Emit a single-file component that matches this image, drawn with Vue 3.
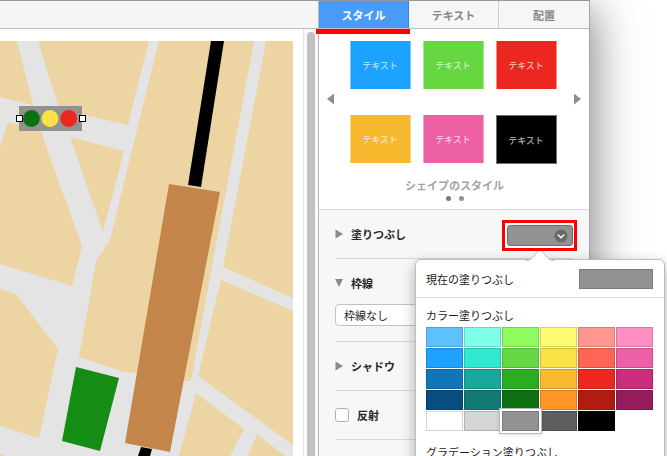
<script setup>
import { ref } from 'vue'

const tabs = ['スタイル', 'テキスト', '配置']
const activeTab = ref('スタイル')

const shapeStyles = [
  { fill: '#1ea2ff', edge: '#7cc8ff' },
  { fill: '#66d741', edge: '#a6e890' },
  { fill: '#ec271f', edge: '#f48a85' },
  { fill: '#f6b82c', edge: '#fad785' },
  { fill: '#ee60a4', edge: '#f5a4cb' },
  { fill: '#000000', edge: '#6b7075' },
]

const colors = [
  '#5cc1fd', '#7dffe9', '#8ffb5c', '#fffb70', '#ff968f', '#ff8ec4',
  '#1ea2ff', '#31e8d0', '#65d844', '#f9e246', '#ff6454', '#ed60a5',
  '#1176b9', '#1ba89c', '#2aae20', '#f7ba2c', '#ec271f', '#ca2d7b',
  '#074e7e', '#117a75', '#0c7211', '#ff9627', '#b11b10', '#961c5c',
  '#ffffff', '#d5d5d5', '#929292', '#5e5e5e', '#000000',
]
const selectedColor = ref('#929292')
const border = ref('none')
const reflection = ref(false)

const blocks = [
  '0,41 17,41 33,105 0,97',
  '38,41 149,41 128,125 59,109',
  '8,122 41,130 48,152 82,246 72,286 0,264 0,148',
  '74,138 124,151 103,232 70,137',
  '159,41 254,41 205,304 191,381 178,381 137,373 124,372 79,357 89,302 96,261 110,240 132,150',
  '266,41 293,41 293,298 223,267 245,152',
  '221,280 293,311 293,445 198,376 215,304',
  '0,289 16,294 22,302 58,349 39,438 0,426',
  '196,393 244,429 230,456 179,456',
  '257,434 285,456 248,456',
  '0,454 5,456 0,456',
]
</script>

<template>
  <div class="desktop">
    <div class="window">
      <main class="document">
        <div class="toolbar"></div>
        <div class="workspace">
          <div class="page">
            <svg class="map" viewBox="0 41 293 415" width="293" height="415" role="img" aria-label="地図">
              <rect x="0" y="41" width="293" height="415" fill="#e4e4e4" />
              <polygon v-for="b in blocks" :key="b" :points="b" fill="#ecd4a3" />
              <polygon points="211,41 224,41 201,187 188,185" fill="#000" />
              <polygon points="141,447 152,449 150,456 138,456" fill="#000" />
              <polygon points="169,184 220,192 170,452 125,443" fill="#c38549" />
              <polygon points="76,367 119,378 100,451 62,441" fill="#158d15" />
              <rect x="19" y="106" width="63" height="25" fill="#929292" />
              <circle cx="31.5" cy="118.5" r="8.4" fill="#0c7211" />
              <circle cx="50" cy="118.5" r="8.4" fill="#f9e246" />
              <circle cx="68.7" cy="118.5" r="8.4" fill="#ec271f" />
              <rect x="16.5" y="115.5" width="6" height="6" fill="#fff" stroke="#000" />
              <rect x="79.5" y="115.5" width="6" height="6" fill="#fff" stroke="#000" />
            </svg>
          </div>
          <div class="scrollbar"><div class="thumb"></div></div>
        </div>
      </main>

      <aside class="inspector">
        <nav class="tabs">
          <button
            v-for="t in tabs"
            :key="t"
            type="button"
            class="tab"
            :class="{ active: t === activeTab }"
            @click="activeTab = t"
          >{{ t }}</button>
          <span class="tab-mark"></span>
        </nav>

        <section class="styles">
          <div class="gallery">
            <button type="button" class="arrow" aria-label="前へ">
              <svg width="8" height="12" viewBox="0 0 8 12"><path d="M7 0.5V11.5L0 6Z" fill="#8e8e8e" /></svg>
            </button>
            <div class="thumbs">
              <button
                v-for="s in shapeStyles"
                :key="s.fill"
                type="button"
                class="shape"
                :style="{ background: s.fill, borderColor: s.edge }"
              >テキスト</button>
            </div>
            <button type="button" class="arrow" aria-label="次へ">
              <svg width="8" height="12" viewBox="0 0 8 12"><path d="M0 0.5V11.5L7 6Z" fill="#8e8e8e" /></svg>
            </button>
          </div>
          <p class="caption">シェイプのスタイル</p>
          <div class="dots"><i class="dot current"></i><i class="dot"></i></div>
        </section>

        <div class="rows">
          <section class="row">
            <svg class="disclosure" width="8" height="10" viewBox="0 0 8 10"><path d="M0.5 0.5V9.5L8 5Z" fill="#8a8a8a" /></svg>
            <h2>塗りつぶし</h2>
            <div class="well-wrap">
              <button type="button" class="well" aria-label="塗りつぶしを選択">
                <svg width="14" height="14" viewBox="0 0 14 14">
                  <circle cx="7" cy="7" r="6.5" fill="#696969" />
                  <path d="M3.8 5.6L7 8.8L10.2 5.6" fill="none" stroke="#fff" stroke-width="1.4" />
                </svg>
              </button>
              <div class="popover">
                <svg class="tip" width="28" height="13" viewBox="0 0 28 13">
                  <path d="M0 13C4 13 5 11 7 9L12 3Q14 1 16 3L21 9C23 11 24 13 28 13Z" fill="#fff" />
                  <path d="M0 12.5C4 12.5 5 11 7 9L12 3Q14 1 16 3L21 9C23 11 24 12.5 28 12.5" fill="none" stroke="#bdbdbd" />
                </svg>
                <div class="current-fill">
                  <h3>現在の塗りつぶし</h3>
                  <span class="fill-sample"></span>
                </div>
                <div class="palette">
                  <h3>カラー塗りつぶし</h3>
                  <div class="swatches">
                    <button
                      v-for="c in colors"
                      :key="c"
                      type="button"
                      class="swatch"
                      :class="{ selected: c === selectedColor }"
                      :style="{ background: c }"
                      :aria-label="c"
                      @click="selectedColor = c"
                    ></button>
                  </div>
                  <h3 class="gradient-title">グラデーション塗りつぶし</h3>
                </div>
              </div>
              <span class="well-mark"></span>
            </div>
          </section>

          <section class="row tall">
            <div class="row-head">
              <svg class="disclosure" width="8" height="10" viewBox="0 0 8 10"><path d="M0 1H8L4 9Z" fill="#8a8a8a" /></svg>
              <h2><label for="border-kind">枠線</label></h2>
            </div>
            <select id="border-kind" v-model="border" class="select">
              <option value="none">枠線なし</option>
              <option value="line">線</option>
            </select>
          </section>

          <section class="row">
            <svg class="disclosure" width="8" height="10" viewBox="0 0 8 10"><path d="M0.5 0.5V9.5L8 5Z" fill="#8a8a8a" /></svg>
            <h2>シャドウ</h2>
          </section>

          <section class="row">
            <input id="reflection" v-model="reflection" type="checkbox" class="check" />
            <label class="check-label" for="reflection">反射</label>
          </section>
        </div>
      </aside>
    </div>
  </div>
</template>

<style>
html,
body {
  background: #fff;
  overflow: hidden;
}
</style>

<style scoped>
.desktop {
  box-sizing: border-box;
  height: 100vh;
  padding-right: 77px;
  overflow: hidden;
  font-family: "Noto Sans CJK JP", sans-serif;
  font-size: 11px;
  line-height: 16px;
  color: #262626;
}
.desktop *,
.desktop *::before {
  box-sizing: border-box;
}
button,
select {
  font: inherit;
  padding: 0;
  margin: 0;
  border: 0;
  background: none;
}
h2,
h3,
p {
  margin: 0;
  font-size: 11px;
}
.window {
  display: flex;
  height: 100%;
  border-top: 1px solid #989898;
  border-right: 1px solid #a5a5a5;
  background: #fff;
  box-shadow: 0 12px 42px 3px rgba(0, 0, 0, 0.5);
}
.document {
  flex: 1;
  min-width: 0;
  display: flex;
  flex-direction: column;
}
.toolbar {
  flex: none;
  height: 28px;
  background: #f5f5f5;
  border-bottom: 1px solid #bfbfbf;
}
.workspace {
  flex: 1;
  min-height: 0;
  display: flex;
}
.page {
  flex: 1;
  min-width: 0;
  padding-top: 12px;
  overflow: hidden;
}
.map {
  display: block;
}
.scrollbar {
  width: 15px;
  padding: 3px 3px 0;
  background: #fafafa;
  border-left: 1px solid #e6e6e6;
}
.thumb {
  width: 8px;
  height: 100%;
  border-radius: 4px 4px 0 0;
  background: #c1c1c1;
}
.inspector {
  width: 271px;
  display: flex;
  flex-direction: column;
  border-left: 1px solid #b9b9b9;
}
.tabs {
  position: relative;
  flex: none;
  display: grid;
  grid-template-columns: repeat(3, 1fr);
  height: 28px;
  background: #f6f6f6;
  border-bottom: 1px solid #bfbfbf;
}
.tab {
  color: #868686;
  font-weight: 700;
  border-right: 1px solid #cfcfcf;
}
.tab:nth-child(3) {
  border-right: 0;
}
.tab.active {
  color: #fff;
  background: #4a9af8;
  border-right-color: #3b7fd6;
}
.tab-mark {
  position: absolute;
  z-index: 2;
  left: -3px;
  top: 28px;
  width: 94px;
  height: 5px;
  background: #f00;
}
.styles {
  flex: none;
  height: 181px;
  padding: 12px 7px 0 8px;
  border-bottom: 1px solid #d9d9d9;
  background: #fff;
}
.gallery {
  display: flex;
  justify-content: space-between;
}
.arrow {
  height: 12px;
  margin-top: 52px;
}
.arrow svg {
  display: block;
}
.thumbs {
  display: grid;
  grid-template-columns: repeat(3, 61px);
  gap: 26px 12px;
  margin-right: 3px;
}
.shape {
  height: 48px;
  padding-top: 2px;
  border: solid;
  border-width: 0 1px;
  color: rgba(255, 255, 255, 0.8);
  font-size: 9px;
}
.shape:last-child {
  height: 49px;
  border-width: 1px;
}
.caption {
  margin-top: 13px;
  text-align: center;
  font-weight: 700;
  color: #a3a3a3;
}
.dots {
  display: flex;
  justify-content: center;
  gap: 8px;
  margin-top: 3px;
}
.dot {
  width: 5px;
  height: 5px;
  border-radius: 50%;
  background: #929292;
}
.dot.current {
  background: #7a7a7a;
}
.rows {
  flex: 1;
  padding: 0 16px;
  background: #f7f7f7;
}
.row {
  display: flex;
  align-items: center;
  height: 49px;
  border-bottom: 1px solid #d9d9d9;
}
.row.tall {
  display: block;
  height: 83px;
}
.row-head {
  display: flex;
  align-items: center;
  height: 45px;
  padding-top: 3px;
}
.disclosure {
  flex: none;
  margin-right: 8px;
}
.well-wrap {
  position: relative;
  margin-left: auto;
}
.well {
  display: flex;
  align-items: center;
  justify-content: flex-end;
  width: 66px;
  height: 21px;
  margin-top: 3px;
  padding-right: 4px;
  border: 1px solid #6f6f6f;
  border-radius: 3px;
  background: #929292;
  box-shadow: 0 0 0 2px #fff;
}
.well-mark {
  position: absolute;
  z-index: 3;
  inset: -2px -4px -5px -5px;
  border: 3px solid #f00;
  pointer-events: none;
}
.popover {
  position: absolute;
  z-index: 1;
  left: -92px;
  top: 37px;
  width: 250px;
  height: 260px;
  border: 1px solid #bdbdbd;
  border-radius: 6px;
  background: #fff;
  box-shadow: 0 5px 14px rgba(0, 0, 0, 0.32);
}
.tip {
  position: absolute;
  left: 110px;
  top: -12px;
}
.current-fill {
  display: flex;
  align-items: center;
  justify-content: space-between;
  height: 38px;
  padding: 0 11px 0 10px;
  border-bottom: 1px solid #e2e2e2;
}
.popover h3 {
  font-weight: 400;
  color: #1a1a1a;
}
.fill-sample {
  width: 74px;
  height: 20px;
  border: 1px solid #7b7b7b;
  background: #929292;
}
.palette {
  padding: 9px 10px 0;
}
.swatches {
  display: grid;
  grid-template-columns: repeat(6, 37px);
  gap: 1px;
  margin-top: 4px;
}
.swatch {
  height: 20px;
  border: 1px solid rgba(0, 0, 0, 0.16);
}
.swatch.selected {
  box-shadow: 0 0 0 2px #fff, 0 0 0 3px #bbb, 0 1px 4px 2px rgba(0, 0, 0, 0.25);
  z-index: 1;
}
.palette .gradient-title {
  margin-top: 13px;
}
.select {
  display: block;
  appearance: none;
  width: 100%;
  height: 22px;
  padding: 0 8px;
  border: 1px solid #c2c2c2;
  border-radius: 4px;
  background: #fff;
  color: #262626;
}
.check {
  appearance: none;
  flex: none;
  width: 14px;
  height: 14px;
  margin: 0 8px 0 0;
  border: 1px solid #b0b0b0;
  border-radius: 3px;
  background: #fff;
}
.check:checked {
  background: #4a9af8;
}
.check-label {
  font-weight: 700;
}
</style>
